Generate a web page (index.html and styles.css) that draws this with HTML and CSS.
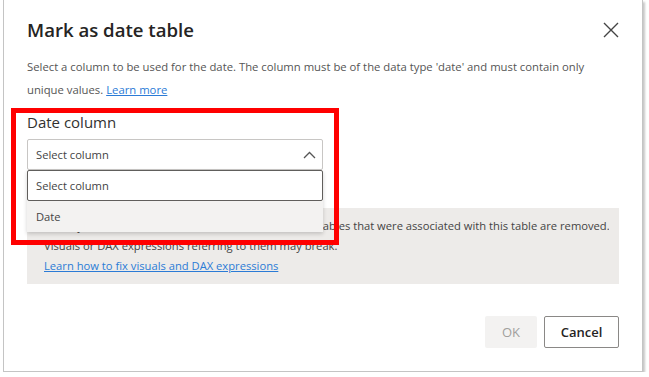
FILE: index.html
```html
<!DOCTYPE html>
<html lang="en">
<head>
<meta charset="utf-8">
<title>Mark as date table</title>
<link rel="stylesheet" href="styles.css">
</head>
<body>
<div class="dialog">
  <div class="header">
    <h1 class="title">Mark as date table</h1>
    <svg class="close" width="16" height="16" viewBox="0 0 16 16" aria-label="Close"><path d="M1 1L15 15M15 1L1 15" stroke="#444" stroke-width="1.4" fill="none"/></svg>
  </div>
  <p class="desc">Select a column to be used for the date. The column must be of the data type 'date' and must contain only unique values. <a class="link" href="#">Learn more</a></p>
  <div class="label">Date column</div>
  <div class="select-wrap">
    <div class="select">
      <span>Select column</span>
      <svg class="chev" width="13" height="8" viewBox="0 0 13 8"><path d="M1 7L6.5 1.5L12 7" stroke="#555" stroke-width="1.3" fill="none"/></svg>
    </div>
    <div class="dropdown">
      <div class="search">Select column</div>
      <div class="option">Date</div>
    </div>
  </div>
  <div class="info">
    <div class="line1">When you mark this as a date table, the built-in date tables that were associated with this table are removed.</div>
    <div>Visuals or DAX expressions referring to them may break.</div>
    <a class="link" href="#">Learn how to fix visuals and DAX expressions</a>
  </div>
  <div class="footer">
    <button class="btn ok" disabled>OK</button>
    <button class="btn cancel">Cancel</button>
  </div>
</div>
<div class="highlight"></div>
</body>
</html>
```
FILE: styles.css
```css
html, body {
  margin: 0;
  padding: 0;
  background: #ffffff;
  font-family: "Open Sans", "Noto Sans", sans-serif;
}
.dialog {
  position: relative;
  box-sizing: border-box;
  margin-left: 3px;
  width: 640px;
  height: 372px;
  border: 1px solid #c4c4c4;
  border-top: none;
  box-shadow: 2px 2px 2px rgba(0,0,0,0.22);
  padding: 15px 23px 0 23px;
  background: #fff;
}
.header {
  display: flex;
  justify-content: space-between;
  align-items: center;
  height: 30px;
}
.title {
  margin: 0;
  font-size: 18.6px;
  font-weight: 600;
  color: #252423;
  line-height: 30px;
}
.desc {
  margin: 10px 0 0 0;
  font-size: 11.3px;
  line-height: 23px;
  color: #555;
}
.link {
  color: #2b7bd6;
  text-decoration: underline;
}
.label {
  margin-top: 11px;
  font-size: 15px;
  line-height: 20px;
  color: #323130;
}
.select-wrap {
  position: relative;
  margin-top: 7px;
  width: 296px;
}
.select {
  box-sizing: border-box;
  height: 31px;
  border: 1px solid #c8c6c4;
  border-radius: 2px;
  display: flex;
  align-items: center;
  justify-content: space-between;
  padding: 0 6px 0 8px;
  font-size: 11.2px;
  color: #444;
}
.dropdown {
  position: absolute;
  left: 0;
  top: 31px;
  width: 296px;
  background: #f3f2f1;
  box-shadow: 0 2px 4px rgba(0,0,0,0.18);
  z-index: 2;
}
.search {
  box-sizing: border-box;
  height: 31px;
  border: 1px solid #605e5c;
  border-radius: 2px;
  background: #fff;
  padding: 0 8px;
  display: flex;
  align-items: center;
  font-size: 11.2px;
  color: #444;
}
.option {
  height: 31px;
  display: flex;
  align-items: center;
  padding: 0 9px;
  font-size: 11.2px;
  color: #444;
}
.info {
  margin-top: 38px;
  background: #edebe9;
  padding: 8px 10px 8px 17px;
  font-size: 11.2px;
  line-height: 20px;
  color: #444;
}
.line1 {
  white-space: nowrap;
  overflow: hidden;
}
.info .link {
  display: inline-block;
}
.footer {
  margin-top: 32px;
  display: flex;
  justify-content: flex-end;
  gap: 7px;
}
.btn {
  height: 32px;
  font-family: inherit;
  font-size: 13px;
  border-radius: 2px;
  padding: 0;
}
.ok {
  width: 52px;
  border: none;
  background: #f3f2f1;
  color: #a19f9d;
}
.cancel {
  width: 75px;
  border: 1px solid #8a8886;
  background: #fff;
  color: #252423;
  font-weight: 600;
}
.highlight {
  position: absolute;
  left: 11px;
  top: 108px;
  width: 328px;
  height: 137px;
  box-sizing: border-box;
  border: 5px solid #ff0000;
  z-index: 3;
}
```
